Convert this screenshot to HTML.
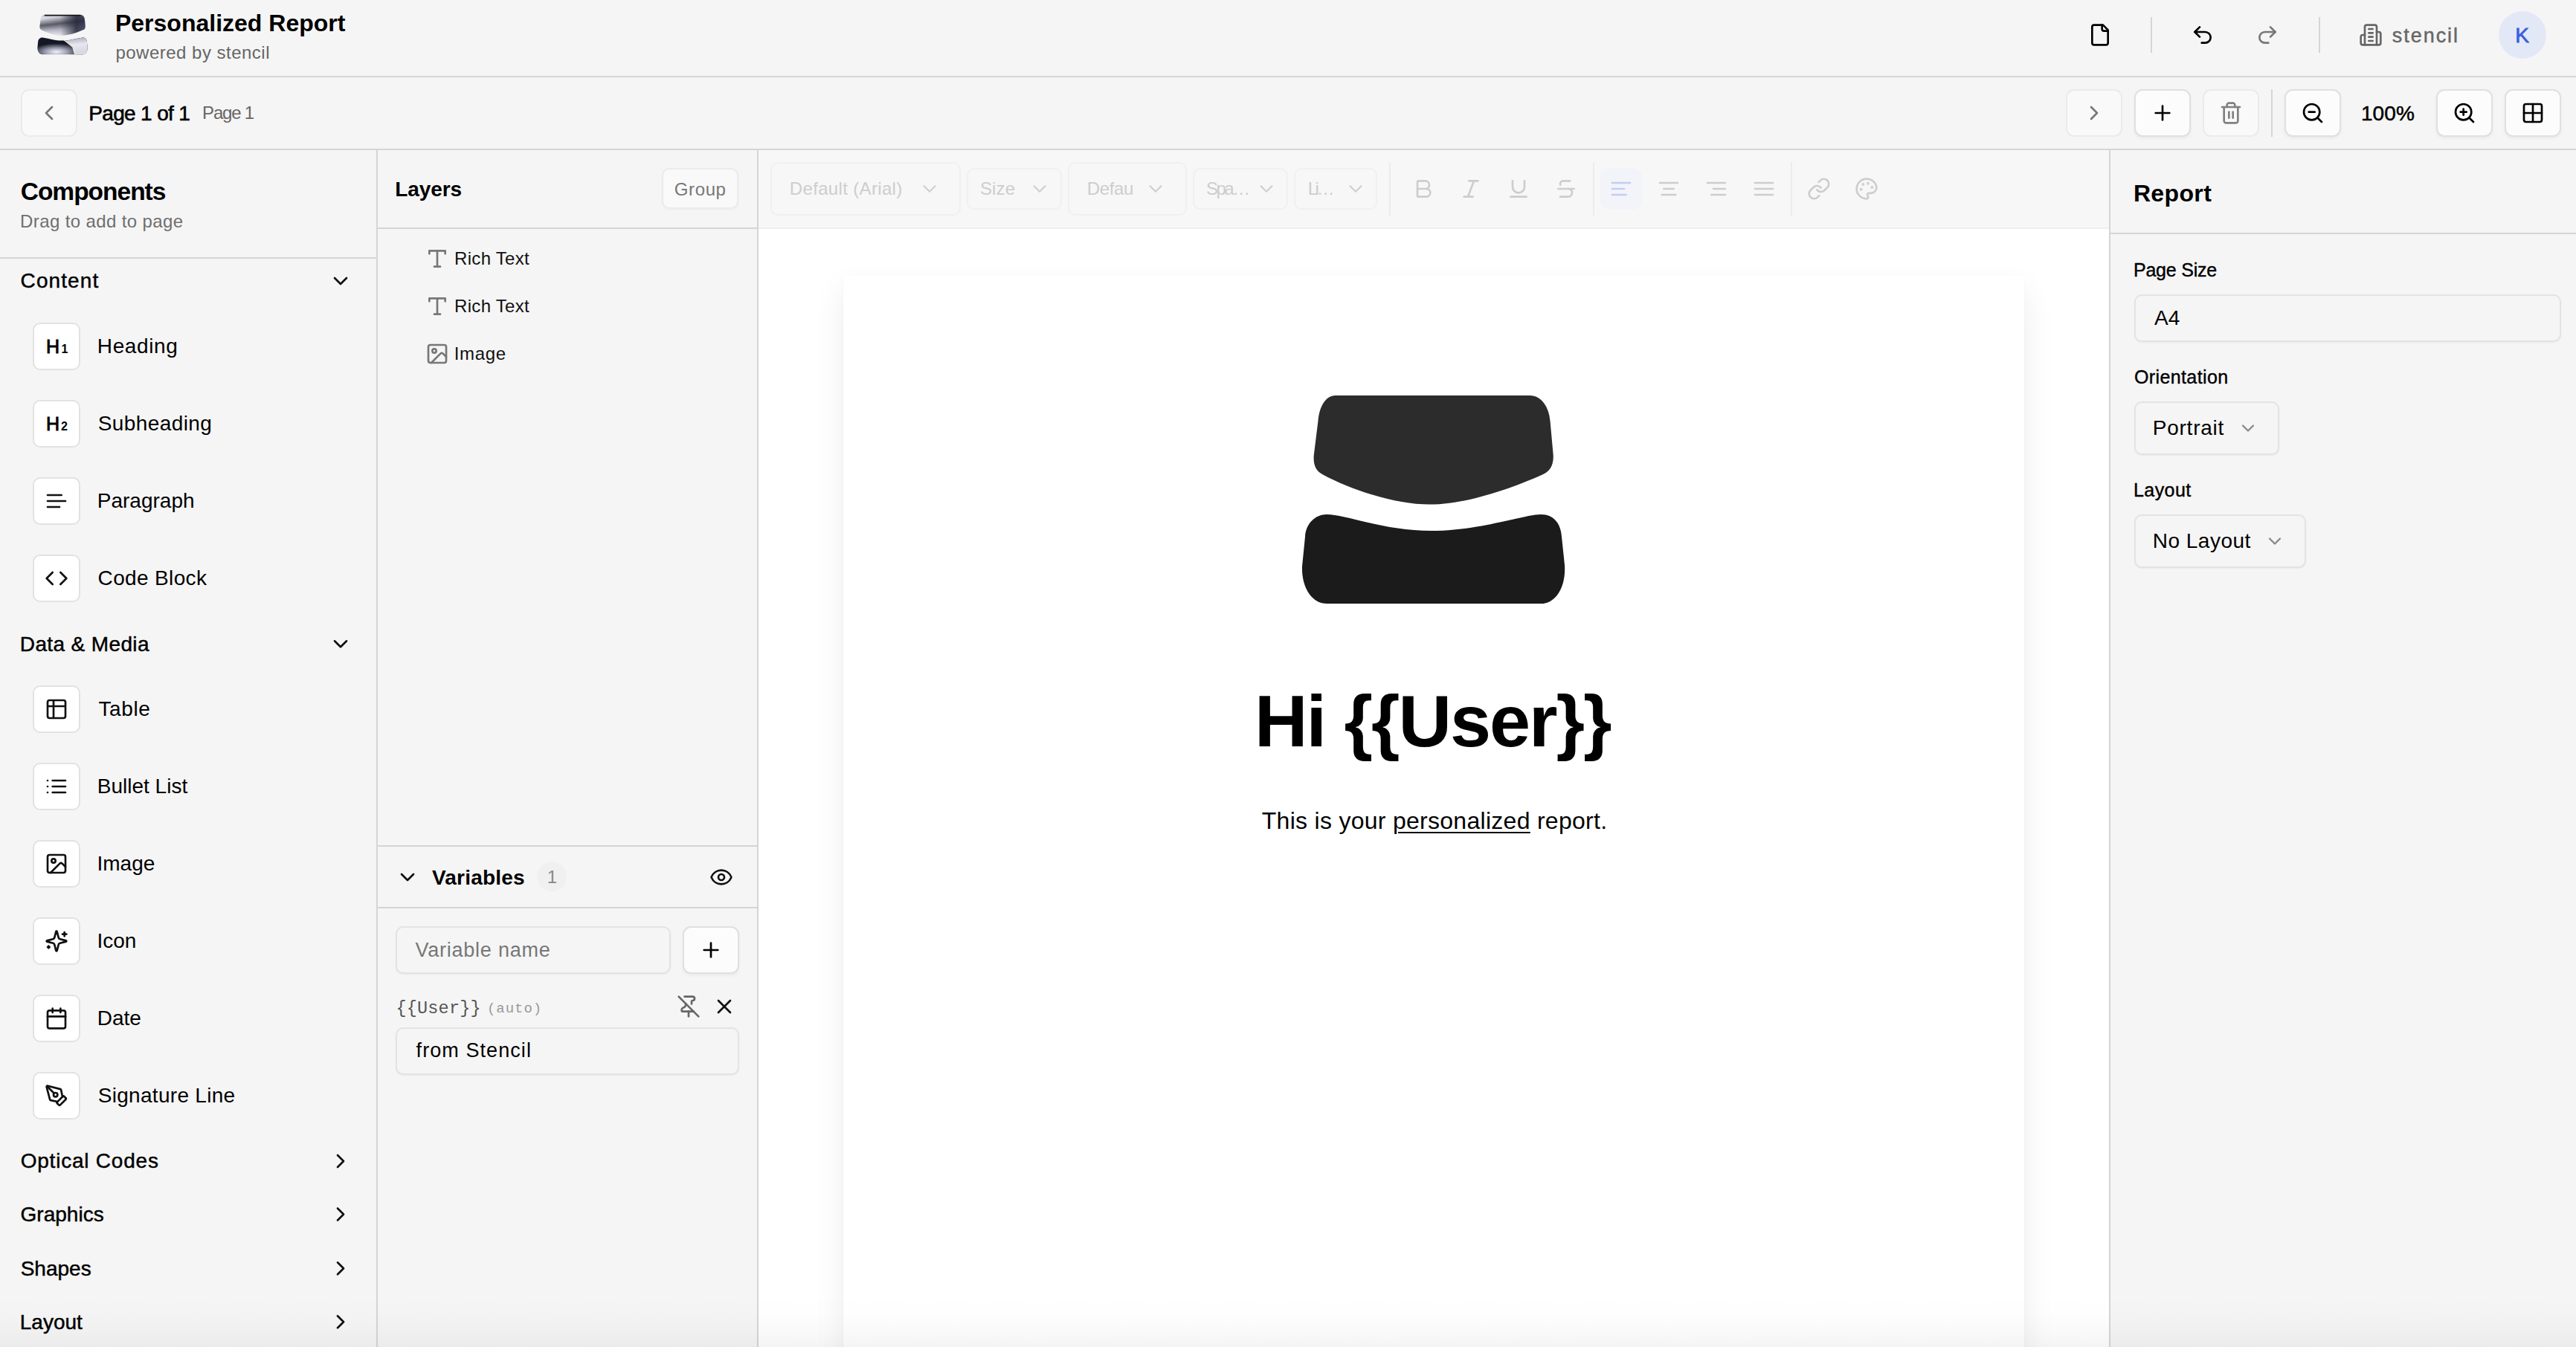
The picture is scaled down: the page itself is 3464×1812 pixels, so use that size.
<!DOCTYPE html>
<html><head><meta charset="utf-8"><title>Personalized Report</title>
<style>
html,body{margin:0;padding:0;}
body{width:3464px;height:1812px;position:relative;overflow:hidden;background:#f5f5f5;font-family:"Liberation Sans",sans-serif;}
.r{position:absolute;}
.t{position:absolute;line-height:1;white-space:pre;}
svg.ov{position:absolute;left:0;top:0;}
</style></head><body>
<div class="r" style="left:0px;top:0px;width:3464px;height:102px;background:#f5f5f5;"></div>
<div class="r" style="left:0px;top:102px;width:3464px;height:2px;background:#d5d5d5;"></div>
<div class="r" style="left:0px;top:104px;width:3464px;height:96px;background:#f5f5f5;"></div>
<div class="r" style="left:0px;top:200px;width:3464px;height:2px;background:#d5d5d5;"></div>
<div class="r" style="left:0px;top:202px;width:506px;height:1610px;background:#f5f5f5;"></div>
<div class="r" style="left:506px;top:202px;width:2px;height:1610px;background:#d5d5d5;"></div>
<div class="r" style="left:508px;top:202px;width:510px;height:1610px;background:#f5f5f5;"></div>
<div class="r" style="left:1018px;top:202px;width:2px;height:1610px;background:#d5d5d5;"></div>
<div class="r" style="left:1020px;top:202px;width:1816px;height:1610px;background:#ffffff;"></div>
<div class="r" style="left:1020px;top:202px;width:1816px;height:104px;background:#f7f7f7;"></div>
<div class="r" style="left:1020px;top:306px;width:1816px;height:2px;background:#eeeeee;"></div>
<div class="r" style="left:2836px;top:202px;width:2px;height:1610px;background:#d5d5d5;"></div>
<div class="r" style="left:2838px;top:202px;width:626px;height:1610px;background:#f5f5f5;"></div>
<div class="t" style="left:154.9px;top:14.9px;font-size:32px;color:#000;font-weight:700;font-family:'Liberation Sans', sans-serif;letter-spacing:0.01px;">Personalized Report</div>
<div class="t" style="left:155.4px;top:58.7px;font-size:24px;color:#666;font-weight:400;font-family:'Liberation Sans', sans-serif;letter-spacing:0.49px;">powered by stencil</div>
<div class="r" style="left:2892px;top:23px;width:2px;height:48px;background:#d5d5d5;"></div>
<div class="r" style="left:3118px;top:23px;width:2px;height:48px;background:#d5d5d5;"></div>
<div class="t" style="left:3216.7px;top:34.6px;font-size:27px;color:#666;font-weight:400;font-family:'Liberation Sans', sans-serif;letter-spacing:1.98px;-webkit-text-stroke:0.45px #666;">stencil</div>
<div class="r" style="left:3360px;top:15px;width:64px;height:64px;border-radius:50%;background:#e3e8f6;"></div>
<div class="t" style="left:3382.3px;top:33.8px;font-size:28px;color:#3a5fe0;font-weight:400;font-family:'Liberation Sans', sans-serif;letter-spacing:0.00px;-webkit-text-stroke:0.8px #3a5fe0;">K</div>
<div class="r" style="left:28px;top:120px;width:76px;height:64px;background:#f9f9f9;border:2px solid #ebebeb;border-radius:11px;box-sizing:border-box;"></div>
<div class="t" style="left:119.3px;top:139.3px;font-size:28px;color:#000;font-weight:400;font-family:'Liberation Sans', sans-serif;letter-spacing:-0.67px;-webkit-text-stroke:0.6px #000;">Page 1 of 1</div>
<div class="t" style="left:272.1px;top:139.7px;font-size:24px;color:#666;font-weight:400;font-family:'Liberation Sans', sans-serif;letter-spacing:-1.22px;">Page 1</div>
<div class="r" style="left:2778px;top:120px;width:76px;height:64px;background:#f9f9f9;border:2px solid #ebebeb;border-radius:11px;box-sizing:border-box;"></div>
<div class="r" style="left:2870px;top:120px;width:76px;height:64px;background:#fcfcfc;border:2px solid #e0e0e0;border-radius:11px;box-sizing:border-box;box-shadow:0 2px 4px rgba(0,0,0,0.05);"></div>
<div class="r" style="left:2962px;top:120px;width:76px;height:64px;background:#f9f9f9;border:2px solid #ebebeb;border-radius:11px;box-sizing:border-box;"></div>
<div class="r" style="left:3054px;top:120px;width:2px;height:64px;background:#d5d5d5;"></div>
<div class="r" style="left:3072px;top:120px;width:76px;height:64px;background:#fcfcfc;border:2px solid #e0e0e0;border-radius:11px;box-sizing:border-box;box-shadow:0 2px 4px rgba(0,0,0,0.05);"></div>
<div class="t" style="left:3174.9px;top:139.3px;font-size:28px;color:#000;font-weight:400;font-family:'Liberation Sans', sans-serif;letter-spacing:0.13px;-webkit-text-stroke:0.5px #000;">100%</div>
<div class="r" style="left:3276px;top:120px;width:76px;height:64px;background:#fcfcfc;border:2px solid #e0e0e0;border-radius:11px;box-sizing:border-box;box-shadow:0 2px 4px rgba(0,0,0,0.05);"></div>
<div class="r" style="left:3368px;top:120px;width:76px;height:64px;background:#fcfcfc;border:2px solid #e0e0e0;border-radius:11px;box-sizing:border-box;box-shadow:0 2px 4px rgba(0,0,0,0.05);"></div>
<div class="t" style="left:27.7px;top:241.2px;font-size:33.5px;color:#000;font-weight:700;font-family:'Liberation Sans', sans-serif;letter-spacing:-1.00px;">Components</div>
<div class="t" style="left:27.1px;top:285.7px;font-size:24px;color:#6f6f6f;font-weight:400;font-family:'Liberation Sans', sans-serif;letter-spacing:0.38px;">Drag to add to page</div>
<div class="r" style="left:0px;top:346px;width:506px;height:2px;background:#d5d5d5;"></div>
<div class="t" style="left:27.6px;top:364.3px;font-size:28px;color:#000;font-weight:400;font-family:'Liberation Sans', sans-serif;letter-spacing:1.09px;-webkit-text-stroke:0.45px #000;">Content</div>
<div class="r" style="left:44px;top:434px;width:64px;height:64px;background:#fff;border:2px solid #e2e2e2;border-radius:10px;box-sizing:border-box;"></div>
<div class="t" style="left:130.8px;top:452.3px;font-size:28px;color:#000;font-weight:400;font-family:'Liberation Sans', sans-serif;letter-spacing:0.63px;">Heading</div>
<div class="t" style="left:62.0px;top:454.3px;font-size:25px;color:#000;font-weight:400;font-family:'Liberation Sans', sans-serif;letter-spacing:0.00px;-webkit-text-stroke:0.9px #000;">H</div>
<div class="t" style="left:82.5px;top:462.0px;font-size:16px;color:#000;font-weight:700;font-family:'Liberation Sans', sans-serif;letter-spacing:0.00px;">1</div>
<div class="r" style="left:44px;top:538px;width:64px;height:64px;background:#fff;border:2px solid #e2e2e2;border-radius:10px;box-sizing:border-box;"></div>
<div class="t" style="left:131.7px;top:556.3px;font-size:28px;color:#000;font-weight:400;font-family:'Liberation Sans', sans-serif;letter-spacing:0.41px;">Subheading</div>
<div class="t" style="left:62.0px;top:558.3px;font-size:25px;color:#000;font-weight:400;font-family:'Liberation Sans', sans-serif;letter-spacing:0.00px;-webkit-text-stroke:0.9px #000;">H</div>
<div class="t" style="left:81.9px;top:566.0px;font-size:16px;color:#000;font-weight:700;font-family:'Liberation Sans', sans-serif;letter-spacing:0.00px;">2</div>
<div class="r" style="left:44px;top:642px;width:64px;height:64px;background:#fff;border:2px solid #e2e2e2;border-radius:10px;box-sizing:border-box;"></div>
<div class="t" style="left:130.8px;top:660.3px;font-size:28px;color:#000;font-weight:400;font-family:'Liberation Sans', sans-serif;letter-spacing:0.00px;">Paragraph</div>
<div class="r" style="left:44px;top:746px;width:64px;height:64px;background:#fff;border:2px solid #e2e2e2;border-radius:10px;box-sizing:border-box;"></div>
<div class="t" style="left:131.6px;top:764.3px;font-size:28px;color:#000;font-weight:400;font-family:'Liberation Sans', sans-serif;letter-spacing:0.35px;">Code Block</div>
<div class="t" style="left:26.8px;top:852.6px;font-size:28px;color:#000;font-weight:400;font-family:'Liberation Sans', sans-serif;letter-spacing:0.37px;-webkit-text-stroke:0.45px #000;">Data &amp; Media</div>
<div class="r" style="left:44px;top:922px;width:64px;height:64px;background:#fff;border:2px solid #e2e2e2;border-radius:10px;box-sizing:border-box;"></div>
<div class="t" style="left:132.4px;top:940.3px;font-size:28px;color:#000;font-weight:400;font-family:'Liberation Sans', sans-serif;letter-spacing:0.62px;">Table</div>
<div class="r" style="left:44px;top:1026px;width:64px;height:64px;background:#fff;border:2px solid #e2e2e2;border-radius:10px;box-sizing:border-box;"></div>
<div class="t" style="left:130.8px;top:1044.3px;font-size:28px;color:#000;font-weight:400;font-family:'Liberation Sans', sans-serif;letter-spacing:0.00px;">Bullet List</div>
<div class="r" style="left:44px;top:1130px;width:64px;height:64px;background:#fff;border:2px solid #e2e2e2;border-radius:10px;box-sizing:border-box;"></div>
<div class="t" style="left:130.5px;top:1148.3px;font-size:28px;color:#000;font-weight:400;font-family:'Liberation Sans', sans-serif;letter-spacing:0.00px;">Image</div>
<div class="r" style="left:44px;top:1234px;width:64px;height:64px;background:#fff;border:2px solid #e2e2e2;border-radius:10px;box-sizing:border-box;"></div>
<div class="t" style="left:130.5px;top:1252.3px;font-size:28px;color:#000;font-weight:400;font-family:'Liberation Sans', sans-serif;letter-spacing:0.00px;">Icon</div>
<div class="r" style="left:44px;top:1338px;width:64px;height:64px;background:#fff;border:2px solid #e2e2e2;border-radius:10px;box-sizing:border-box;"></div>
<div class="t" style="left:130.8px;top:1356.3px;font-size:28px;color:#000;font-weight:400;font-family:'Liberation Sans', sans-serif;letter-spacing:0.00px;">Date</div>
<div class="r" style="left:44px;top:1442px;width:64px;height:64px;background:#fff;border:2px solid #e2e2e2;border-radius:10px;box-sizing:border-box;"></div>
<div class="t" style="left:131.7px;top:1460.3px;font-size:28px;color:#000;font-weight:400;font-family:'Liberation Sans', sans-serif;letter-spacing:0.30px;">Signature Line</div>
<div class="t" style="left:27.7px;top:1548.3px;font-size:28px;color:#000;font-weight:400;font-family:'Liberation Sans', sans-serif;letter-spacing:0.78px;-webkit-text-stroke:0.45px #000;">Optical Codes</div>
<div class="t" style="left:27.6px;top:1619.8px;font-size:28px;color:#000;font-weight:400;font-family:'Liberation Sans', sans-serif;letter-spacing:0.00px;-webkit-text-stroke:0.45px #000;">Graphics</div>
<div class="t" style="left:27.7px;top:1692.6px;font-size:28px;color:#000;font-weight:400;font-family:'Liberation Sans', sans-serif;letter-spacing:0.00px;-webkit-text-stroke:0.45px #000;">Shapes</div>
<div class="t" style="left:26.8px;top:1764.5px;font-size:28px;color:#000;font-weight:400;font-family:'Liberation Sans', sans-serif;letter-spacing:0.00px;-webkit-text-stroke:0.45px #000;">Layout</div>
<div class="t" style="left:531.2px;top:241.3px;font-size:28px;color:#000;font-weight:700;font-family:'Liberation Sans', sans-serif;letter-spacing:-0.07px;">Layers</div>
<div class="r" style="left:890px;top:226px;width:103px;height:55px;background:#f9f9f9;border:2px solid #ebebeb;border-radius:10px;box-sizing:border-box;box-shadow:0 1px 3px rgba(0,0,0,0.04);"></div>
<div class="t" style="left:906.8px;top:242.7px;font-size:24px;color:#777;font-weight:400;font-family:'Liberation Sans', sans-serif;letter-spacing:0.61px;">Group</div>
<div class="r" style="left:508px;top:306px;width:510px;height:2px;background:#d5d5d5;"></div>
<div class="t" style="left:611.1px;top:335.7px;font-size:24px;color:#111;font-weight:400;font-family:'Liberation Sans', sans-serif;letter-spacing:0.29px;">Rich Text</div>
<div class="t" style="left:611.1px;top:399.7px;font-size:24px;color:#111;font-weight:400;font-family:'Liberation Sans', sans-serif;letter-spacing:0.29px;">Rich Text</div>
<div class="t" style="left:610.8px;top:463.7px;font-size:24px;color:#111;font-weight:400;font-family:'Liberation Sans', sans-serif;letter-spacing:0.63px;">Image</div>
<div class="r" style="left:508px;top:1137px;width:510px;height:2px;background:#d5d5d5;"></div>
<div class="t" style="left:580.9px;top:1167.0px;font-size:28px;color:#000;font-weight:700;font-family:'Liberation Sans', sans-serif;letter-spacing:0.22px;">Variables</div>
<div class="r" style="left:722px;top:1159px;width:40px;height:40px;border-radius:50%;background:#f0f0f0;"></div>
<div class="t" style="left:735.7px;top:1168.2px;font-size:24px;color:#888;font-weight:400;font-family:'Liberation Sans', sans-serif;letter-spacing:0.00px;">1</div>
<div class="r" style="left:508px;top:1220px;width:510px;height:2px;background:#d5d5d5;"></div>
<div class="r" style="left:532px;top:1246px;width:370px;height:64px;background:#f5f5f5;border:2px solid #e3e3e3;border-radius:10px;box-sizing:border-box;box-shadow:0 1px 2px rgba(0,0,0,0.05);"></div>
<div class="t" style="left:558.4px;top:1265.1px;font-size:27px;color:#777;font-weight:400;font-family:'Liberation Sans', sans-serif;letter-spacing:0.77px;">Variable name</div>
<div class="r" style="left:918px;top:1246px;width:76px;height:64px;background:#fcfcfc;border:2px solid #e0e0e0;border-radius:11px;box-sizing:border-box;box-shadow:0 2px 4px rgba(0,0,0,0.05);"></div>
<div class="t" style="left:532.4px;top:1344.6px;font-size:23.5px;color:#555;font-weight:400;font-family:'Liberation Mono', monospace;letter-spacing:0.20px;">{{User}}</div>
<div class="t" style="left:654.9px;top:1348.4px;font-size:19px;color:#999;font-weight:400;font-family:'Liberation Mono', monospace;letter-spacing:0.97px;">(auto)</div>
<div class="r" style="left:532px;top:1382px;width:462px;height:64px;background:#f5f5f5;border:2px solid #e3e3e3;border-radius:10px;box-sizing:border-box;box-shadow:0 1px 2px rgba(0,0,0,0.05);"></div>
<div class="t" style="left:559.6px;top:1400.1px;font-size:27px;color:#000;font-weight:400;font-family:'Liberation Sans', sans-serif;letter-spacing:1.07px;">from Stencil</div>
<div class="r" style="left:1036px;top:218px;width:256px;height:72px;border:2px solid #f0f0f0;border-radius:10px;box-sizing:border-box;"></div>
<div class="t" style="left:1061.8px;top:241.7px;font-size:24px;color:#cdcdcd;font-weight:400;font-family:'Liberation Sans', sans-serif;letter-spacing:0.34px;">Default (Arial)</div>
<div class="r" style="left:1300px;top:226px;width:128px;height:56px;border:2px solid #f0f0f0;border-radius:10px;box-sizing:border-box;"></div>
<div class="t" style="left:1317.9px;top:241.7px;font-size:24px;color:#cdcdcd;font-weight:400;font-family:'Liberation Sans', sans-serif;letter-spacing:0.16px;">Size</div>
<div class="r" style="left:1436px;top:218px;width:160px;height:72px;border:2px solid #f0f0f0;border-radius:10px;box-sizing:border-box;"></div>
<div class="t" style="left:1461.8px;top:241.7px;font-size:24px;color:#cdcdcd;font-weight:400;font-family:'Liberation Sans', sans-serif;letter-spacing:-0.37px;">Defau</div>
<div class="r" style="left:1604px;top:226px;width:128px;height:56px;border:2px solid #f0f0f0;border-radius:10px;box-sizing:border-box;"></div>
<div class="t" style="left:1621.9px;top:241.7px;font-size:24px;color:#cdcdcd;font-weight:400;font-family:'Liberation Sans', sans-serif;letter-spacing:-2.47px;">Spa…</div>
<div class="r" style="left:1740px;top:226px;width:112px;height:56px;border:2px solid #f0f0f0;border-radius:10px;box-sizing:border-box;"></div>
<div class="t" style="left:1758.8px;top:241.7px;font-size:24px;color:#cdcdcd;font-weight:400;font-family:'Liberation Sans', sans-serif;letter-spacing:-3.53px;">Li…</div>
<div class="r" style="left:1868px;top:218px;width:2px;height:72px;background:#ececec;"></div>
<div class="r" style="left:2142px;top:218px;width:2px;height:72px;background:#ececec;"></div>
<div class="r" style="left:2152px;top:226px;width:56px;height:56px;background:#f2f4f9;border-radius:12px;"></div>
<div class="r" style="left:2408px;top:218px;width:2px;height:72px;background:#ececec;"></div>
<div class="r" style="left:1134px;top:371px;width:1588px;height:1600px;background:#fff;box-shadow:0 2px 4px rgba(0,0,0,0.02), 0 18px 40px rgba(0,0,0,0.075);"></div>
<div class="t" style="left:1686.9px;top:920.4px;font-size:99px;color:#000;font-weight:700;font-family:'Liberation Sans', sans-serif;letter-spacing:-2.00px;">Hi {{User}}</div>
<div class="t" style="left:1696.8px;top:1088.1px;font-size:32px;font-family:'Liberation Sans',sans-serif;color:#000;white-space:pre;letter-spacing:0.28px;">This is your <span style="text-decoration:underline;text-decoration-thickness:2px;text-underline-offset:4px;">personalized</span> report.</div>
<div class="t" style="left:2868.9px;top:243.9px;font-size:32px;color:#000;font-weight:700;font-family:'Liberation Sans', sans-serif;letter-spacing:0.37px;">Report</div>
<div class="r" style="left:2838px;top:313px;width:626px;height:2px;background:#d5d5d5;"></div>
<div class="t" style="left:2869.0px;top:351.4px;font-size:25px;color:#000;font-weight:400;font-family:'Liberation Sans', sans-serif;letter-spacing:-0.23px;-webkit-text-stroke:0.4px #000;">Page Size</div>
<div class="r" style="left:2870px;top:396px;width:574px;height:64px;background:#f5f5f5;border:2px solid #e3e3e3;border-radius:10px;box-sizing:border-box;box-shadow:0 1px 2px rgba(0,0,0,0.05);"></div>
<div class="t" style="left:2897.0px;top:414.3px;font-size:28px;color:#000;font-weight:400;font-family:'Liberation Sans', sans-serif;letter-spacing:0.00px;">A4</div>
<div class="t" style="left:2869.9px;top:495.3px;font-size:25px;color:#000;font-weight:400;font-family:'Liberation Sans', sans-serif;letter-spacing:0.40px;-webkit-text-stroke:0.4px #000;">Orientation</div>
<div class="r" style="left:2870px;top:540px;width:195px;height:72px;background:#f5f5f5;border:2px solid #e3e3e3;border-radius:10px;box-sizing:border-box;box-shadow:0 1px 2px rgba(0,0,0,0.05);"></div>
<div class="t" style="left:2894.8px;top:562.3px;font-size:28px;color:#000;font-weight:400;font-family:'Liberation Sans', sans-serif;letter-spacing:0.75px;">Portrait</div>
<div class="t" style="left:2869.0px;top:647.3px;font-size:25px;color:#000;font-weight:400;font-family:'Liberation Sans', sans-serif;letter-spacing:0.42px;-webkit-text-stroke:0.4px #000;">Layout</div>
<div class="r" style="left:2870px;top:692px;width:231px;height:72px;background:#f5f5f5;border:2px solid #e3e3e3;border-radius:10px;box-sizing:border-box;box-shadow:0 1px 2px rgba(0,0,0,0.05);"></div>
<div class="t" style="left:2894.8px;top:713.7px;font-size:28px;color:#000;font-weight:400;font-family:'Liberation Sans', sans-serif;letter-spacing:0.48px;">No Layout</div>
<svg class="ov" width="3464" height="1812" viewBox="0 0 3464 1812">
<g transform="translate(2808.00 31.00) scale(1.3333)" stroke="#000" color="#000" stroke-width="2" fill="none" stroke-linecap="round" stroke-linejoin="round"><path d="M15 2H6a2 2 0 0 0-2 2v16a2 2 0 0 0 2 2h12a2 2 0 0 0 2-2V7Z"/><path d="M14 2v4a2 2 0 0 0 2 2h4"/></g>
<g transform="translate(2946.00 31.00) scale(1.3333)" stroke="#000" color="#000" stroke-width="2" fill="none" stroke-linecap="round" stroke-linejoin="round"><path d="M9 14 4 9l5-5"/><path d="M4 9h10.5a5.5 5.5 0 0 1 5.5 5.5a5.5 5.5 0 0 1-5.5 5.5H11"/></g>
<g transform="translate(3033.00 31.00) scale(1.3333)" stroke="#777" color="#777" stroke-width="2" fill="none" stroke-linecap="round" stroke-linejoin="round"><path d="m15 14 5-5-5-5"/><path d="M20 9H9.5A5.5 5.5 0 0 0 4 14.5A5.5 5.5 0 0 0 9.5 20H13"/></g>
<g transform="translate(3172.00 31.00) scale(1.3333)" stroke="#666" color="#666" stroke-width="2" fill="none" stroke-linecap="round" stroke-linejoin="round"><path d="M6 22V4a2 2 0 0 1 2-2h8a2 2 0 0 1 2 2v18Z"/><path d="M6 12H4a2 2 0 0 0-2 2v6a2 2 0 0 0 2 2h2"/><path d="M18 9h2a2 2 0 0 1 2 2v9a2 2 0 0 1-2 2h-2"/><path d="M10 6h4"/><path d="M10 10h4"/><path d="M10 14h4"/><path d="M10 18h4"/></g>
<g transform="translate(50.00 136.00) scale(1.3333)" stroke="#777" color="#777" stroke-width="2" fill="none" stroke-linecap="round" stroke-linejoin="round"><path d="m15 18-6-6 6-6"/></g>
<g transform="translate(2800.00 136.00) scale(1.3333)" stroke="#777" color="#777" stroke-width="2" fill="none" stroke-linecap="round" stroke-linejoin="round"><path d="m9 18 6-6-6-6"/></g>
<g transform="translate(2892.00 136.00) scale(1.3333)" stroke="#000" color="#000" stroke-width="2" fill="none" stroke-linecap="round" stroke-linejoin="round"><path d="M5 12h14"/><path d="M12 5v14"/></g>
<g transform="translate(2984.00 136.00) scale(1.3333)" stroke="#808080" color="#808080" stroke-width="2" fill="none" stroke-linecap="round" stroke-linejoin="round"><path d="M3 6h18"/><path d="M19 6v14c0 1-1 2-2 2H7c-1 0-2-1-2-2V6"/><path d="M8 6V4c0-1 1-2 2-2h4c1 0 2 1 2 2v2"/><path d="M10 11v6"/><path d="M14 11v6"/></g>
<g transform="translate(3094.00 136.00) scale(1.3333)" stroke="#000" color="#000" stroke-width="2" fill="none" stroke-linecap="round" stroke-linejoin="round"><circle cx="11" cy="11" r="8"/><path d="M21 21l-4.35-4.35"/><path d="M8 11h6"/></g>
<g transform="translate(3298.00 136.00) scale(1.3333)" stroke="#000" color="#000" stroke-width="2" fill="none" stroke-linecap="round" stroke-linejoin="round"><circle cx="11" cy="11" r="8"/><path d="M21 21l-4.35-4.35"/><path d="M11 8v6"/><path d="M8 11h6"/></g>
<g transform="translate(3390.00 136.00) scale(1.3333)" stroke="#000" color="#000" stroke-width="2" fill="none" stroke-linecap="round" stroke-linejoin="round"><rect width="18" height="18" x="3" y="3" rx="2"/><path d="M3 12h18"/><path d="M12 3v18"/></g>
<g transform="translate(442.00 362.00) scale(1.3333)" stroke="#111" color="#111" stroke-width="2" fill="none" stroke-linecap="round" stroke-linejoin="round"><path d="m6 9 6 6 6-6"/></g>
<g transform="translate(60.00 658.00) scale(1.3333)" stroke="#111" color="#111" stroke-width="2" fill="none" stroke-linecap="round" stroke-linejoin="round"><path d="M17 6H3"/><path d="M21 12H3"/><path d="M15 18H3"/></g>
<g transform="translate(60.00 762.00) scale(1.3333)" stroke="#111" color="#111" stroke-width="2" fill="none" stroke-linecap="round" stroke-linejoin="round"><path d="m16 18 6-6-6-6"/><path d="m8 6-6 6 6 6"/></g>
<g transform="translate(442.00 850.30) scale(1.3333)" stroke="#111" color="#111" stroke-width="2" fill="none" stroke-linecap="round" stroke-linejoin="round"><path d="m6 9 6 6 6-6"/></g>
<g transform="translate(60.00 938.00) scale(1.3333)" stroke="#111" color="#111" stroke-width="2" fill="none" stroke-linecap="round" stroke-linejoin="round"><path d="M9 3H5a2 2 0 0 0-2 2v4m6-6h10a2 2 0 0 1 2 2v4M9 3v18m0 0h10a2 2 0 0 0 2-2V9M9 21H5a2 2 0 0 1-2-2V9m0 0h18"/></g>
<g transform="translate(60.00 1042.00) scale(1.3333)" stroke="#111" color="#111" stroke-width="2" fill="none" stroke-linecap="round" stroke-linejoin="round"><path d="M8 6h13"/><path d="M8 12h13"/><path d="M8 18h13"/><path d="M3 6h.01"/><path d="M3 12h.01"/><path d="M3 18h.01"/></g>
<g transform="translate(60.00 1146.00) scale(1.3333)" stroke="#111" color="#111" stroke-width="2" fill="none" stroke-linecap="round" stroke-linejoin="round"><rect width="18" height="18" x="3" y="3" rx="2" ry="2"/><circle cx="9" cy="9" r="2"/><path d="m21 15-3.086-3.086a2 2 0 0 0-2.828 0L6 21"/></g>
<g transform="translate(60.00 1250.00) scale(1.3333)" stroke="#111" color="#111" stroke-width="2" fill="none" stroke-linecap="round" stroke-linejoin="round"><path d="M9.937 15.5A2 2 0 0 0 8.5 14.063l-6.135-1.582a.5.5 0 0 1 0-.962L8.5 9.936A2 2 0 0 0 9.937 8.5l1.582-6.135a.5.5 0 0 1 .963 0L14.063 8.5A2 2 0 0 0 15.5 9.937l6.135 1.581a.5.5 0 0 1 0 .964L15.5 14.063a2 2 0 0 0-1.437 1.437l-1.582 6.135a.5.5 0 0 1-.963 0z"/><path d="M20 3v4"/><path d="M22 5h-4"/><path d="M4 17v2"/><path d="M5 18H3"/></g>
<g transform="translate(60.00 1354.00) scale(1.3333)" stroke="#111" color="#111" stroke-width="2" fill="none" stroke-linecap="round" stroke-linejoin="round"><path d="M8 2v4"/><path d="M16 2v4"/><rect width="18" height="18" x="3" y="4" rx="2"/><path d="M3 10h18"/></g>
<g transform="translate(60.00 1458.00) scale(1.3333)" stroke="#111" color="#111" stroke-width="2" fill="none" stroke-linecap="round" stroke-linejoin="round"><path d="M15.707 21.293a1 1 0 0 1-1.414 0l-1.586-1.586a1 1 0 0 1 0-1.414l5.586-5.586a1 1 0 0 1 1.414 0l1.586 1.586a1 1 0 0 1 0 1.414z"/><path d="m18 13-1.375-6.874a1 1 0 0 0-.746-.776L3.235 2.028a1 1 0 0 0-1.207 1.207L5.35 15.879a1 1 0 0 0 .776.746L13 18"/><path d="m2.3 2.3 7.286 7.286"/><circle cx="11" cy="11" r="2"/></g>
<g transform="translate(442.00 1546.00) scale(1.3333)" stroke="#111" color="#111" stroke-width="2" fill="none" stroke-linecap="round" stroke-linejoin="round"><path d="m9 18 6-6-6-6"/></g>
<g transform="translate(442.00 1617.50) scale(1.3333)" stroke="#111" color="#111" stroke-width="2" fill="none" stroke-linecap="round" stroke-linejoin="round"><path d="m9 18 6-6-6-6"/></g>
<g transform="translate(442.00 1690.30) scale(1.3333)" stroke="#111" color="#111" stroke-width="2" fill="none" stroke-linecap="round" stroke-linejoin="round"><path d="m9 18 6-6-6-6"/></g>
<g transform="translate(442.00 1762.20) scale(1.3333)" stroke="#111" color="#111" stroke-width="2" fill="none" stroke-linecap="round" stroke-linejoin="round"><path d="m9 18 6-6-6-6"/></g>
<g transform="translate(572.00 332.00) scale(1.3333)" stroke="#777" color="#777" stroke-width="2" fill="none" stroke-linecap="round" stroke-linejoin="round"><path d="M4 7V4h16v3"/><path d="M9 20h6"/><path d="M12 4v16"/></g>
<g transform="translate(572.00 396.00) scale(1.3333)" stroke="#777" color="#777" stroke-width="2" fill="none" stroke-linecap="round" stroke-linejoin="round"><path d="M4 7V4h16v3"/><path d="M9 20h6"/><path d="M12 4v16"/></g>
<g transform="translate(572.00 460.00) scale(1.3333)" stroke="#777" color="#777" stroke-width="2" fill="none" stroke-linecap="round" stroke-linejoin="round"><rect width="18" height="18" x="3" y="3" rx="2" ry="2"/><circle cx="9" cy="9" r="2"/><path d="m21 15-3.086-3.086a2 2 0 0 0-2.828 0L6 21"/></g>
<g transform="translate(532.00 1164.00) scale(1.3333)" stroke="#111" color="#111" stroke-width="2" fill="none" stroke-linecap="round" stroke-linejoin="round"><path d="m6 9 6 6 6-6"/></g>
<g transform="translate(954.00 1164.00) scale(1.3333)" stroke="#111" color="#111" stroke-width="2" fill="none" stroke-linecap="round" stroke-linejoin="round"><path d="M2.062 12.348a1 1 0 0 1 0-.696 10.75 10.75 0 0 1 19.876 0 1 1 0 0 1 0 .696 10.75 10.75 0 0 1-19.876 0"/><circle cx="12" cy="12" r="3"/></g>
<g transform="translate(940.00 1262.00) scale(1.3333)" stroke="#000" color="#000" stroke-width="2" fill="none" stroke-linecap="round" stroke-linejoin="round"><path d="M5 12h14"/><path d="M12 5v14"/></g>
<g transform="translate(910.00 1338.00) scale(1.3333)" stroke="#666" color="#666" stroke-width="2" fill="none" stroke-linecap="round" stroke-linejoin="round"><path d="M12 17v5"/><path d="M15 9.34V7a1 1 0 0 1 1-1 2 2 0 0 0 0-4H7.89"/><path d="m2 2 20 20"/><path d="M9 9v1.76a2 2 0 0 1-1.11 1.79l-1.78.9A2 2 0 0 0 5 15.24V16a1 1 0 0 0 1 1h11"/></g>
<g transform="translate(958.00 1338.00) scale(1.3333)" stroke="#111" color="#111" stroke-width="2" fill="none" stroke-linecap="round" stroke-linejoin="round"><path d="M18 6 6 18"/><path d="m6 6 12 12"/></g>
<g transform="translate(1235.00 239.00) scale(1.2500)" stroke="#cdcdcd" color="#cdcdcd" stroke-width="1.6" fill="none" stroke-linecap="round" stroke-linejoin="round"><path d="m6 9 6 6 6-6"/></g>
<g transform="translate(1383.00 239.00) scale(1.2500)" stroke="#cdcdcd" color="#cdcdcd" stroke-width="1.6" fill="none" stroke-linecap="round" stroke-linejoin="round"><path d="m6 9 6 6 6-6"/></g>
<g transform="translate(1539.00 239.00) scale(1.2500)" stroke="#cdcdcd" color="#cdcdcd" stroke-width="1.6" fill="none" stroke-linecap="round" stroke-linejoin="round"><path d="m6 9 6 6 6-6"/></g>
<g transform="translate(1688.00 239.00) scale(1.2500)" stroke="#cdcdcd" color="#cdcdcd" stroke-width="1.6" fill="none" stroke-linecap="round" stroke-linejoin="round"><path d="m6 9 6 6 6-6"/></g>
<g transform="translate(1808.00 239.00) scale(1.2500)" stroke="#cdcdcd" color="#cdcdcd" stroke-width="1.6" fill="none" stroke-linecap="round" stroke-linejoin="round"><path d="m6 9 6 6 6-6"/></g>
<g transform="translate(1898.00 238.00) scale(1.3333)" stroke="#cdcdcd" color="#cdcdcd" stroke-width="2" fill="none" stroke-linecap="round" stroke-linejoin="round"><path d="M6 12h9a4 4 0 0 1 0 8H7a1 1 0 0 1-1-1V5a1 1 0 0 1 1-1h7a4 4 0 0 1 0 8"/></g>
<g transform="translate(1962.00 238.00) scale(1.3333)" stroke="#cdcdcd" color="#cdcdcd" stroke-width="2" fill="none" stroke-linecap="round" stroke-linejoin="round"><path d="M19 4h-9"/><path d="M14 20H5"/><path d="M15 4 9 20"/></g>
<g transform="translate(2026.00 238.00) scale(1.3333)" stroke="#cdcdcd" color="#cdcdcd" stroke-width="2" fill="none" stroke-linecap="round" stroke-linejoin="round"><path d="M6 4v6a6 6 0 0 0 12 0V4"/><path d="M4 20h16"/></g>
<g transform="translate(2090.00 238.00) scale(1.3333)" stroke="#cdcdcd" color="#cdcdcd" stroke-width="2" fill="none" stroke-linecap="round" stroke-linejoin="round"><path d="M16 4H9a3 3 0 0 0-2.83 4"/><path d="M14 12a4 4 0 0 1 0 8H6"/><path d="M4 12h16"/></g>
<g transform="translate(2164.00 238.00) scale(1.3333)" stroke="#c2cef2" color="#c2cef2" stroke-width="2" fill="none" stroke-linecap="round" stroke-linejoin="round"><path d="M21 6H3"/><path d="M15 12H3"/><path d="M17 18H3"/></g>
<g transform="translate(2228.00 238.00) scale(1.3333)" stroke="#cdcdcd" color="#cdcdcd" stroke-width="2" fill="none" stroke-linecap="round" stroke-linejoin="round"><path d="M21 6H3"/><path d="M17 12H7"/><path d="M19 18H5"/></g>
<g transform="translate(2292.00 238.00) scale(1.3333)" stroke="#cdcdcd" color="#cdcdcd" stroke-width="2" fill="none" stroke-linecap="round" stroke-linejoin="round"><path d="M21 6H3"/><path d="M21 12H9"/><path d="M21 18H7"/></g>
<g transform="translate(2356.00 238.00) scale(1.3333)" stroke="#cdcdcd" color="#cdcdcd" stroke-width="2" fill="none" stroke-linecap="round" stroke-linejoin="round"><path d="M3 6h18"/><path d="M3 12h18"/><path d="M3 18h18"/></g>
<g transform="translate(2430.00 238.00) scale(1.3333)" stroke="#cdcdcd" color="#cdcdcd" stroke-width="2" fill="none" stroke-linecap="round" stroke-linejoin="round"><path d="M10 13a5 5 0 0 0 7.54.54l3-3a5 5 0 0 0-7.07-7.07l-1.72 1.71"/><path d="M14 11a5 5 0 0 0-7.54-.54l-3 3a5 5 0 0 0 7.07 7.07l1.71-1.71"/></g>
<g transform="translate(2494.00 238.00) scale(1.3333)" stroke="#cdcdcd" color="#cdcdcd" stroke-width="2" fill="none" stroke-linecap="round" stroke-linejoin="round"><circle cx="13.5" cy="6.5" r=".5" fill="currentColor"/><circle cx="17.5" cy="10.5" r=".5" fill="currentColor"/><circle cx="8.5" cy="7.5" r=".5" fill="currentColor"/><circle cx="6.5" cy="12.5" r=".5" fill="currentColor"/><path d="M12 2C6.5 2 2 6.5 2 12s4.5 10 10 10c.926 0 1.648-.746 1.648-1.688 0-.437-.18-.835-.437-1.125-.29-.289-.438-.652-.438-1.125a1.64 1.64 0 0 1 1.668-1.668h1.996c3.051 0 5.555-2.503 5.555-5.554C21.965 6.012 17.461 2 12 2z"/></g>
<path fill="#2c2c2c" d="M1796 532 L2057 532 C2073 532 2083 548 2084.5 566 L2088.7 612 C2089.5 626 2084 635 2073 639 C2030 658 1970 678.6 1922.4 678.6 C1875 678.6 1815 658 1779 638.5 C1770 634 1765.5 626 1766.8 612 L1772.5 566 C1774 548 1782 532 1796 532 Z"/>
<path fill="#1b1b1b" d="M1784 692 C1810 692 1860 714 1925 714 C1990 714 2050 692 2072 692 C2090 692 2099 705 2100 722 L2104 760 C2106 790 2092 812 2072 812 L1784 812 C1764 812 1750 790 1751 762 L1755 722 C1756 705 1768 692 1784 692 Z"/>
<defs>
<linearGradient id="gt" x1="0" y1="0" x2="0.25" y2="1"><stop offset="0" stop-color="#c9cad3"/><stop offset="0.18" stop-color="#dfe0e8"/><stop offset="0.5" stop-color="#5d5e6a"/><stop offset="0.78" stop-color="#c4c6d2"/><stop offset="1" stop-color="#f2f3fa"/></linearGradient>
<linearGradient id="gtr" x1="0" y1="0" x2="1" y2="0"><stop offset="0" stop-color="#20212e" stop-opacity="0"/><stop offset="0.45" stop-color="#20212e" stop-opacity="0.1"/><stop offset="0.8" stop-color="#23243a" stop-opacity="0.85"/><stop offset="1" stop-color="#2a2b40" stop-opacity="0.8"/></linearGradient>
<radialGradient id="gb" cx="0.38" cy="0.85" r="0.5"><stop offset="0" stop-color="#f0f2fa"/><stop offset="0.45" stop-color="#9c9eb0"/><stop offset="1" stop-color="#161726"/></radialGradient>
<linearGradient id="gbr" x1="0" y1="0" x2="0.3" y2="1"><stop offset="0" stop-color="#8c8ea2"/><stop offset="0.6" stop-color="#e6e7f0"/><stop offset="1" stop-color="#d8d9e4"/></linearGradient>
<clipPath id="cb"><path d="M1925 700 L2000 760 L2015 815 L2120 815 L2120 680 Z"/></clipPath>
</defs>
<g transform="translate(50.4 19.9) scale(0.1905) translate(-1751 -532)"><path fill="url(#gt)" d="M1796 532 L2057 532 C2073 532 2083 548 2084.5 566 L2088.7 612 C2089.5 626 2084 635 2073 639 C2030 658 1970 678.6 1922.4 678.6 C1875 678.6 1815 658 1779 638.5 C1770 634 1765.5 626 1766.8 612 L1772.5 566 C1774 548 1782 532 1796 532 Z"/><path fill="url(#gtr)" d="M1796 532 L2057 532 C2073 532 2083 548 2084.5 566 L2088.7 612 C2089.5 626 2084 635 2073 639 C2030 658 1970 678.6 1922.4 678.6 C1875 678.6 1815 658 1779 638.5 C1770 634 1765.5 626 1766.8 612 L1772.5 566 C1774 548 1782 532 1796 532 Z"/><path fill="none" stroke="#151515" stroke-width="9" d="M1800 536 L2055 536"/><path fill="url(#gb)" d="M1784 692 C1810 692 1860 714 1925 714 C1990 714 2050 692 2072 692 C2090 692 2099 705 2100 722 L2104 760 C2106 790 2092 812 2072 812 L1784 812 C1764 812 1750 790 1751 762 L1755 722 C1756 705 1768 692 1784 692 Z"/><path fill="url(#gbr)" clip-path="url(#cb)" d="M1784 692 C1810 692 1860 714 1925 714 C1990 714 2050 692 2072 692 C2090 692 2099 705 2100 722 L2104 760 C2106 790 2092 812 2072 812 L1784 812 C1764 812 1750 790 1751 762 L1755 722 C1756 705 1768 692 1784 692 Z"/><path fill="none" stroke="#f7f0d0" stroke-width="6" d="M1925 700 L2000 760 L2015 812"/></g>
<g transform="translate(3009.00 562.00) scale(1.1667)" stroke="#888" color="#888" stroke-width="2" fill="none" stroke-linecap="round" stroke-linejoin="round"><path d="m6 9 6 6 6-6"/></g>
<g transform="translate(3045.00 714.00) scale(1.1667)" stroke="#888" color="#888" stroke-width="2" fill="none" stroke-linecap="round" stroke-linejoin="round"><path d="m6 9 6 6 6-6"/></g>
</svg>
<div class="r" style="left:0px;top:1742px;width:3464px;height:70px;background:linear-gradient(to bottom, rgba(0,0,0,0) 0%, rgba(0,0,0,0.008) 40%, rgba(0,0,0,0.025) 75%, rgba(0,0,0,0.045) 100%);pointer-events:none;"></div>
</body></html>
